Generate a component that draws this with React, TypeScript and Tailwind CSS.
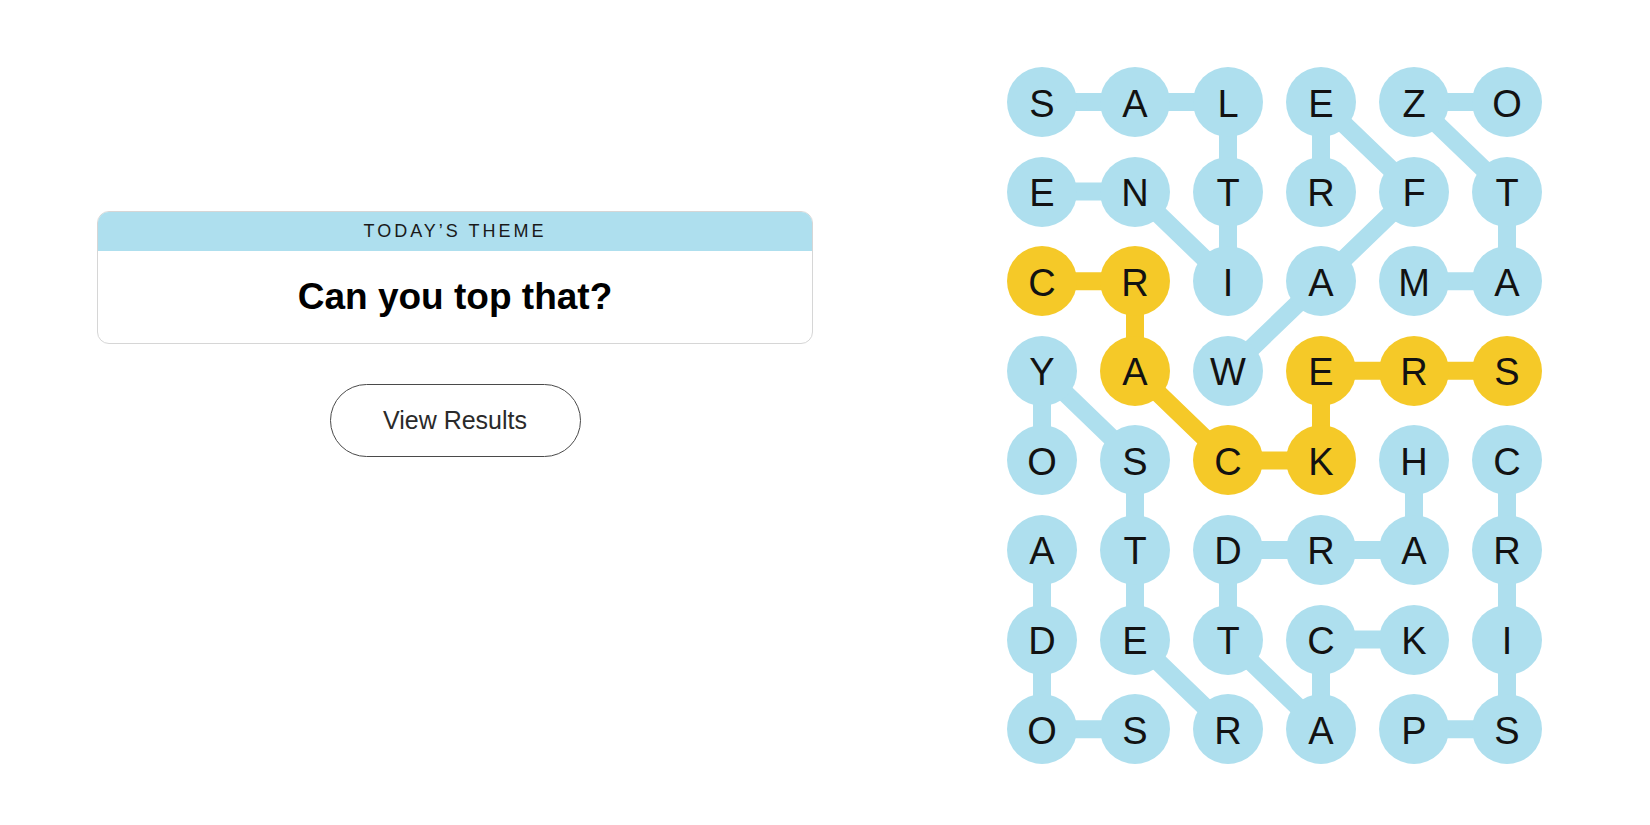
import React from 'react';

const rows = [
    'SALEZO',
    'ENTRFT',
    'CRIAMA',
    'YAWERS',
    'OSCKHC',
    'ATDRAR',
    'DETCKI',
    'OSRAPS',
];

// cells of the spangram
const gold = ['2,0', '2,1', '3,1', '4,2', '4,3', '3,3', '3,4', '3,5'];

// each found word as a path of [row, col]
const words: number[][][] = [
    [[0, 0], [0, 1], [0, 2], [1, 2], [2, 2], [1, 1], [1, 0]],
    [[3, 2], [2, 3], [1, 4], [0, 3], [1, 3]],
    [[2, 4], [2, 5], [1, 5], [0, 4], [0, 5]],
    [[7, 1], [7, 0], [6, 0], [5, 0]],
    [[4, 0], [3, 0], [4, 1], [5, 1], [6, 1], [7, 2]],
    [[4, 4], [5, 4], [5, 3], [5, 2], [6, 2], [7, 3], [6, 3], [6, 4]],
    [[4, 5], [5, 5], [6, 5], [7, 5], [7, 4]],
];
const spangram = [[2, 0], [2, 1], [3, 1], [4, 2], [4, 3], [3, 3], [3, 4], [3, 5]];

const cx = (c: number) => 35 + c * 93;
const cy = (r: number) => 35 + r * 89.6;

const toPoints = (w: number[][]) => w.map(([r, c]) => `${cx(c)},${cy(r)}`).join(' ');

const Board = () => {
    return (
        <div className="relative w-[535px] h-[697px]">
            <svg className="absolute inset-0" width="535" height="697">
                {words.map((w, i) => (
                    <polyline key={i} points={toPoints(w)} fill="none" stroke="#aedfee" strokeWidth="18" strokeLinejoin="round" />
                ))}
                <polyline points={toPoints(spangram)} fill="none" stroke="#f5c928" strokeWidth="18" strokeLinejoin="round" />
            </svg>
            <div className="relative grid grid-cols-[repeat(6,70px)] grid-rows-[repeat(8,70px)] gap-x-[23px] gap-y-[19.6px]">
                {rows.map((row, r) =>
                    row.split('').map((ch, c) => (
                        <div
                            key={r + '-' + c}
                            className={
                                gold.includes(r + ',' + c)
                                    ? 'w-[70px] h-[70px] rounded-full bg-[#f5c928] flex items-center justify-center text-[38px] text-[#121212] pt-[4px]'
                                    : 'w-[70px] h-[70px] rounded-full bg-[#aedfee] flex items-center justify-center text-[38px] text-[#121212] pt-[4px]'
                            }
                        >
                            {ch}
                        </div>
                    ))
                )}
            </div>
        </div>
    );
};

export default function App() {
    return (
        <div className="flex w-full h-[825px] bg-white font-['Liberation_Sans',Arial,sans-serif]">
            <div className="ml-[97px] mt-[211px] w-[716px] flex flex-col items-center">
                <div className="w-full rounded-[12px] border border-[#d6d6d6] overflow-hidden">
                    <div className="h-[39px] bg-[#aedfee] flex items-center justify-center text-[18px] tracking-[3px] text-[#1a1a1a]">
                        TODAY’S THEME
                    </div>
                    <div className="h-[92px] flex items-center justify-center text-[37px] font-bold text-black">
                        Can you top that?
                    </div>
                </div>
                <button className="mt-[40px] w-[251px] h-[73px] rounded-full border border-[#4a4a4a] text-[25px] text-[#2a2a2a] bg-white">
                    View Results
                </button>
            </div>
            <div className="ml-[194px] mt-[67px]">
                <Board />
            </div>
        </div>
    );
}
